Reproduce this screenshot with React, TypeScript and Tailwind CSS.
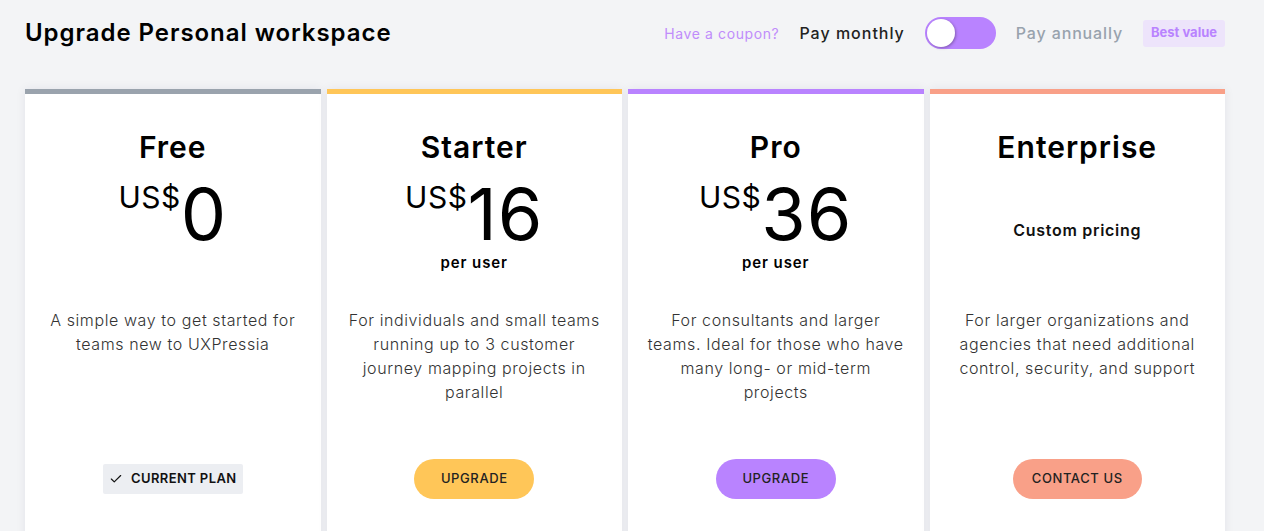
import { Check } from "lucide-react";

type Plan = {
  name: string;
  price?: string;
  perUser?: boolean;
  custom?: string;
  lines: string[];
  bar: string;
  button: string;
  btnClass: string;
  current?: boolean;
};

const plans: Plan[] = [
  {
    name: "Free",
    price: "0",
    lines: ["A simple way to get started for", "teams new to UXPressia"],
    bar: "border-[#9aa3ad]",
    button: "CURRENT PLAN",
    btnClass: "",
    current: true,
  },
  {
    name: "Starter",
    price: "16",
    perUser: true,
    lines: ["For individuals and small teams", "running up to 3 customer", "journey mapping projects in", "parallel"],
    bar: "border-[#ffc658]",
    button: "UPGRADE",
    btnClass: "bg-[#ffc658] w-[120px]",
  },
  {
    name: "Pro",
    price: "36",
    perUser: true,
    lines: ["For consultants and larger", "teams. Ideal for those who have", "many long- or mid-term", "projects"],
    bar: "border-[#b983ff]",
    button: "UPGRADE",
    btnClass: "bg-[#b983ff] w-[120px]",
  },
  {
    name: "Enterprise",
    custom: "Custom pricing",
    lines: ["For larger organizations and", "agencies that need additional", "control, security, and support"],
    bar: "border-[#f9a088]",
    button: "CONTACT US",
    btnClass: "bg-[#f9a088] w-[129px]",
  },
];

const PlanCard = ({ plan }: { plan: Plan }): React.ReactElement => {
  return (
    <div className={`flex-1 h-[460px] bg-white border-t-[5px] ${plan.bar} shadow-[0_0_10px_rgba(30,30,80,0.07)] flex flex-col items-center`}>
      <div className="h-[214px] w-full flex flex-col items-center pt-[35px]">
        <div className="text-[30px] leading-[36px] font-semibold text-black tracking-[1px]">{plan.name}</div>

        {plan.price && (
          <div className="mt-[13px] flex items-start text-black">
            <span className="text-[30px] leading-[30px] mt-[4px] tracking-[0.5px]">US$</span>
            <span className="text-[72px] leading-[72px] tracking-[1px]">{plan.price}</span>
          </div>
        )}
        {plan.perUser && (
          <div className="mt-[3px] text-[15px] leading-[20px] font-semibold text-black tracking-[0.9px]">per user</div>
        )}
        {plan.custom && (
          <div className="mt-[55px] text-[16px] leading-[20px] font-semibold text-[#111] tracking-[0.7px]">{plan.custom}</div>
        )}
      </div>

      <div className="h-[150px] w-full px-2 text-center text-[16px] leading-[24px] font-light text-[#333] tracking-[0.6px]">
        {plan.lines.map((l, i) => (
          <div key={i} className="whitespace-nowrap">{l}</div>
        ))}
      </div>

      <div className="h-[40px] mt-[1px] flex items-center justify-center">
        {plan.current ? (
          <div className="h-[30px] w-[140px] bg-[#eceef2] rounded-[2px] flex items-center justify-center gap-[8px] text-[13px] font-semibold text-[#111] tracking-[0.4px]">
            <Check size={14} strokeWidth={2} />
            {plan.button}
          </div>
        ) : (
          <button className={`h-[40px] rounded-full text-[13px] font-medium text-[#222] tracking-[0.6px] ${plan.btnClass}`}>
            {plan.button}
          </button>
        )}
      </div>
    </div>
  );
};

const App = (): React.ReactElement => {
  return (
    <div className="min-h-screen bg-[#f3f4f6] px-[25px] pt-[17px] font-['Inter','Liberation_Sans',sans-serif]">
      <div className="w-[1200px] h-[32px] flex items-center justify-between">
        <h1 className="text-[24px] font-semibold text-black tracking-[0.95px]">Upgrade Personal workspace</h1>

        <div className="flex items-center">
          <span className="text-[14px] text-[#c08cfb] tracking-[0.6px]">Have a coupon?</span>
          <span className="ml-[20px] text-[16px] font-medium text-[#222] tracking-[1px]">Pay monthly</span>
          <div className="ml-[20px] w-[71px] h-[32px] rounded-full bg-[#b983ff] relative">
            <div className="absolute left-[2px] top-[2px] w-[28px] h-[28px] rounded-full bg-white shadow-[1px_1px_3px_rgba(0,0,0,0.3)]" />
          </div>
          <span className="ml-[20px] text-[16px] font-medium text-[#98a2ad] tracking-[0.85px]">Pay annually</span>
          <span className="ml-[20px] h-[27px] px-[8px] rounded-[3px] bg-[#ede4fb] text-[13px] font-bold text-[#b983ff] flex items-center">
            Best value
          </span>
        </div>
      </div>

      <div className="w-[1200px] mt-[40px] flex gap-[6px]">
        {plans.map((p) => (
          <PlanCard key={p.name} plan={p} />
        ))}
      </div>
    </div>
  );
};

export default App;
